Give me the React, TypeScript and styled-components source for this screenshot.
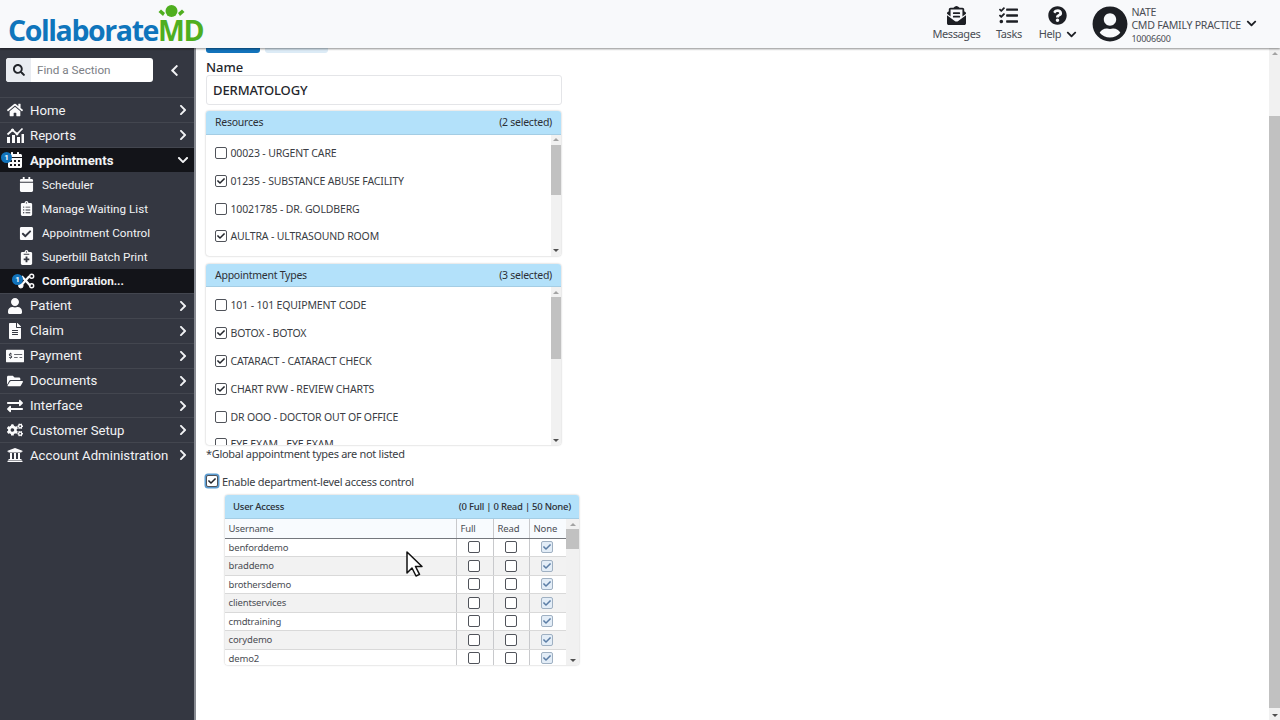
import * as React from 'react'
import styled, { createGlobalStyle } from 'styled-components'
import {
  FaCalendar, FaCalendarAlt, FaCheck, FaCheckSquare, FaChevronDown, FaChevronLeft, FaChevronRight,
  FaClipboardList, FaCogs, FaEnvelopeOpenText, FaExchangeAlt, FaFileAlt, FaFolderOpen, FaHome,
  FaMoneyCheckAlt, FaNotesMedical, FaQuestionCircle, FaSearch, FaTasks, FaUniversity, FaUser, FaUserCircle,
} from 'react-icons/fa'

const GlobalStyle = createGlobalStyle`
  html, body {
    margin: 0;
    height: 100%;
    overflow: hidden;
    background: #fff;
  }
  * { box-sizing: border-box; }
`

const contentFont = `"Noto Sans", "Open Sans", sans-serif`

const Page = styled.div`
  width: 1280px;
  height: 720px;
  position: relative;
  display: flex;
  flex-direction: column;
  overflow: hidden;
  font-family: ${contentFont};
  color: #33363d;
`

const Header = styled.header`
  height: 48px;
  flex: none;
  display: flex;
  align-items: center;
  justify-content: space-between;
  background: #f8f9fb;
  box-shadow: 0 1px 2px rgba(0, 0, 0, 0.45);
  position: relative;
  z-index: 3;
  padding: 0 23px 0 8px;
`

const Logo = styled.div`
  position: relative;
  display: flex;
  align-items: baseline;
  font-family: "Open Sans", sans-serif;
  font-weight: 700;
  font-size: 28.5px;
  line-height: 48px;
  letter-spacing: -1.4px;
  padding-top: 12px;
  color: #0f75bc;
  svg {
    position: absolute;
    left: 149px;
    top: 9px;
  }
`

const LogoMark = styled.span`
  color: #4fae1f;
  letter-spacing: -1.5px;
`

const HeaderRight = styled.div`
  display: flex;
  align-items: center;
`

const HeaderAction = styled.div<{ $width: number }>`
  width: ${p => p.$width}px;
  display: flex;
  flex-direction: column;
  align-items: center;
  color: #1d1f24;
  font-size: 11px;
  letter-spacing: -0.4px;
  svg { font-size: 19px; }
`

const ActionLabel = styled.span`
  color: #4a4d54;
  line-height: 16px;
  margin-top: 1px;
  display: flex;
  align-items: center;
  gap: 5px;
  svg { font-size: 11px; color: #1d1f24; }
`

const Account = styled.div`
  display: flex;
  align-items: center;
  margin-left: 10px;
  color: #1d1f24;
`

const AccountText = styled.div`
  margin-left: 3.5px;
  padding-top: 2px;
  font-size: 10.6px;
  line-height: 13px;
  letter-spacing: -0.25px;
  color: #4a4d54;
`

const AccountId = styled.div`
  font-size: 9px;
`

const AccountRow = styled.div`
  display: flex;
  align-items: center;
  gap: 5px;
  svg { font-size: 11px; color: #1d1f24; margin-top: -4px; }
`

const Body = styled.div`
  flex: 1;
  display: flex;
  min-height: 0;
`

const Sidebar = styled.nav`
  width: 196px;
  flex: none;
  background: #343741;
  border-right: 2px solid #888b92;
  font-family: Roboto, sans-serif;
  color: #f2f3f5;
`

const SearchRow = styled.div`
  height: 49.4px;
  padding: 10px 0 0 6px;
  display: flex;
  align-items: flex-start;
`

const SearchBox = styled.div`
  width: 147px;
  height: 24px;
  display: flex;
  border-radius: 3px;
  overflow: hidden;
  background: #fff;
`

const SearchIcon = styled.div`
  width: 25px;
  display: flex;
  align-items: center;
  justify-content: center;
  background: #e9ecf1;
  color: #22252b;
  font-size: 12px;
`

const SearchText = styled.div`
  padding-left: 6px;
  color: #7b7e84;
  font-size: 11.7px;
  line-height: 24px;
`

const Collapse = styled.div`
  margin-left: 15px;
  height: 24px;
  display: flex;
  align-items: center;
  font-size: 13px;
`

const NavRow = styled.div<{ $active?: boolean; $sub?: boolean }>`
  height: ${p => (p.$sub ? 24.2 : 24.9)}px;
  display: flex;
  align-items: center;
  position: relative;
  padding-left: ${p => (p.$sub ? 42 : 30)}px;
  padding-right: 5px;
  font-size: ${p => (p.$sub ? 11.7 : 13.2)}px;
  font-weight: ${p => (p.$active ? 700 : 400)};
  white-space: nowrap;
  background: ${p => (p.$active ? '#131419' : 'transparent')};
  border-top: 1px solid ${p => (p.$sub ? 'transparent' : '#43464f')};
`

const NavLabel = styled.span`
  flex: 1;
`

const NavIcon = styled.span<{ $sub?: boolean }>`
  position: absolute;
  left: ${p => (p.$sub ? 18 : 5)}px;
  width: ${p => (p.$sub ? 17 : 19)}px;
  display: flex;
  justify-content: center;
  font-size: ${p => (p.$sub ? 15 : 16)}px;
  color: #fbfbfc;
`

const Badge = styled.span<{ $left: number }>`
  position: absolute;
  left: ${p => p.$left}px;
  top: 4px;
  width: 11px;
  height: 11px;
  border-radius: 50%;
  background: #1273bb;
  color: #fff;
  font-size: 8px;
  line-height: 11px;
  font-weight: 700;
  text-align: center;
  z-index: 1;
`

const NavArrow = styled.span`
  width: 13px;
  font-size: 12px;
  display: flex;
  justify-content: center;
`

const Main = styled.main`
  flex: 1;
  min-width: 0;
  padding: 0 0 0 10px;
  overflow: hidden;
`

const Form = styled.div`
  width: 373px;
  display: flex;
  flex-direction: column;
`

const Tabs = styled.div`
  height: 5px;
  display: flex;
  gap: 5px;
`

const Tab = styled.div<{ $active?: boolean; $width: number }>`
  width: ${p => p.$width}px;
  border-radius: 0 0 3px 3px;
  background: ${p => (p.$active ? '#1273bb' : '#dcebf6')};
`

const FieldLabel = styled.div`
  margin-top: 6px;
  font-size: 13px;
  line-height: 16px;
  font-weight: 500;
  color: #24262c;
`

const TextField = styled.div`
  width: 356px;
  height: 30px;
  border: 1px solid #e4e5e8;
  border-radius: 3px;
  padding-left: 6px;
  font-size: 13px;
  line-height: 28px;
  font-weight: 500;
  letter-spacing: -0.1px;
  color: #24262c;
  margin-bottom: 6px;
`

const Panel = styled.section<{ $width?: number; $height: number; $gap?: number }>`
  width: ${p => p.$width ?? 355}px;
  height: ${p => p.$height}px;
  margin-top: ${p => p.$gap ?? 0}px;
  flex: none;
  display: flex;
  flex-direction: column;
  border-radius: 3px;
  background: #fff;
  box-shadow: 0 0 2px rgba(0, 0, 0, 0.3);
  overflow: hidden;
`

const PanelHeader = styled.div`
  height: 23.5px;
  flex: none;
  display: flex;
  justify-content: space-between;
  align-items: center;
  padding: 0 9px;
  background: #b3e1fa;
  border-bottom: 1px solid #a4cde4;
  font-size: 10.5px;
  letter-spacing: -0.25px;
  color: #2d3036;
`

const PanelBody = styled.div`
  flex: 1;
  min-height: 0;
  display: flex;
`

const CheckList = styled.div`
  flex: 1;
  overflow: hidden;
  padding: 4.6px 0 0 9px;
`

const CheckRow = styled.div`
  height: 27.8px;
  display: flex;
  align-items: center;
  gap: 3.5px;
  font-size: 10.5px;
  letter-spacing: -0.15px;
  color: #3a3d44;
`

const Box = styled.span<{ $muted?: boolean; $focus?: boolean }>`
  width: 12px;
  height: 12px;
  flex: none;
  display: inline-flex;
  align-items: center;
  justify-content: center;
  border: 1px solid ${p => (p.$muted ? '#9fb0c2' : '#50535a')};
  border-radius: 2px;
  background: ${p => (p.$muted ? '#e3edf7' : '#fff')};
  color: ${p => (p.$muted ? '#5c7ea6' : '#23262c')};
  font-size: 8px;
  box-shadow: ${p => (p.$focus ? '0 0 0 1.5px #5b9bd0' : 'none')};
`

const Scrollbar = styled.div<{ $width: number }>`
  width: ${p => p.$width}px;
  flex: none;
  display: flex;
  flex-direction: column;
  background: #f1f1f1;
`

const ScrollArrow = styled.div<{ $down?: boolean }>`
  height: 10px;
  flex: none;
  display: flex;
  align-items: center;
  justify-content: center;
  &::before {
    content: '';
    border-left: 3px solid transparent;
    border-right: 3px solid transparent;
    ${p => (p.$down ? 'border-top: 3px solid #505050;' : 'border-bottom: 3px solid #a3a3a3;')}
  }
`

const ScrollTrack = styled.div`
  flex: 1;
`

const ScrollThumb = styled.div<{ $height: number; $top?: number }>`
  height: ${p => p.$height}px;
  margin-top: ${p => p.$top ?? 0}px;
  background: #c1c1c1;
`

const Note = styled.div`
  margin-top: 1px;
  font-size: 11px;
  line-height: 16px;
  letter-spacing: -0.3px;
  color: #3a3d44;
`

const EnableRow = styled.div`
  margin-top: 11px;
  height: 16px;
  display: flex;
  align-items: center;
  gap: 4px;
  font-size: 11px;
  letter-spacing: -0.27px;
  color: #3a3d44;
`

const AccessWrap = styled.div`
  margin: 6px 0 0 19px;
`

const AccessHead = styled(PanelHeader)`
  height: 24px;
  font-weight: 500;
  padding: 0 8px;
  font-size: 9.5px;
`

const AccessTable = styled.div`
  flex: 1;
  min-width: 0;
  overflow: hidden;
`

const AccessRow = styled.div<{ $head?: boolean; $odd?: boolean }>`
  height: ${p => (p.$head ? 19.5 : 18.5)}px;
  display: grid;
  grid-template-columns: 231px 37px 36px 37px;
  background: ${p => (p.$head ? '#f8fbfe' : p.$odd ? '#f2f2f2' : '#fff')};
  border-bottom: 1px solid ${p => (p.$head ? '#74777d' : '#d9d9d9')};
  font-size: 9.5px;
  letter-spacing: -0.15px;
  color: #4a4d54;
`

const AccessCell = styled.div<{ $center?: boolean }>`
  display: flex;
  align-items: center;
  padding-left: ${p => (p.$center ? 0 : 3.5)}px;
  padding-right: ${p => (p.$center ? 1.5 : 0)}px;
  justify-content: ${p => (p.$center ? 'center' : 'flex-start')};
  & + & { border-left: 1px solid #c8c9cc; }
`

const PageScrollbar = styled(Scrollbar)`
  background: #f1f1f1;
`

const Pointer = styled.svg`
  position: absolute;
  left: 406px;
  top: 551px;
  z-index: 2;
`

const ReportsIcon = () => (
  <svg width="18" height="16" viewBox="0 0 18 16" fill="currentColor">
    <path d="M1 10h3v6H1zM6 8h3v8H6zM11 10h3v6h-3zM15.5 7h2.5v9h-2.5z" />
    <path d="M1.5 7.5 6.5 3l4.5 4 5.5-5.5" fill="none" stroke="currentColor" strokeWidth="1.7" />
    <circle cx="6.5" cy="3" r="1.6" />
    <circle cx="11" cy="7" r="1.4" />
  </svg>
)

const ConfigIcon = () => (
  <svg width="18" height="16" viewBox="0 0 18 16" fill="none" stroke="currentColor">
    <path d="M3 13 12 3M4 3l9 10" strokeWidth="2.4" />
    <circle cx="14.5" cy="3" r="2.1" strokeWidth="1.5" />
    <circle cx="14.5" cy="13" r="2.1" strokeWidth="1.5" />
    <circle cx="3" cy="13" r="2.4" fill="currentColor" />
  </svg>
)

const Check: React.FC<{ checked?: boolean; muted?: boolean; focus?: boolean }> = ({ checked, muted, focus }) => (
  <Box $muted={muted} $focus={focus}>{checked && <FaCheck />}</Box>
)

const PanelScroll: React.FC<{ width: number; thumb: number }> = ({ width, thumb }) => (
  <Scrollbar $width={width}>
    <ScrollArrow />
    <ScrollTrack>
      <ScrollThumb $height={thumb} />
    </ScrollTrack>
    <ScrollArrow $down />
  </Scrollbar>
)

const topNav = [
  { label: 'Home', icon: <FaHome /> },
  { label: 'Reports', icon: <ReportsIcon /> },
]
const subNav = [
  { label: 'Scheduler', icon: <FaCalendar /> },
  { label: 'Manage Waiting List', icon: <FaClipboardList /> },
  { label: 'Appointment Control', icon: <FaCheckSquare /> },
  { label: 'Superbill Batch Print', icon: <FaNotesMedical /> },
]
const bottomNav = [
  { label: 'Patient', icon: <FaUser /> },
  { label: 'Claim', icon: <FaFileAlt /> },
  { label: 'Payment', icon: <FaMoneyCheckAlt size={18} /> },
  { label: 'Documents', icon: <FaFolderOpen /> },
  { label: 'Interface', icon: <FaExchangeAlt /> },
  { label: 'Customer Setup', icon: <FaCogs /> },
  { label: 'Account Administration', icon: <FaUniversity /> },
]

const resources = [
  { label: '00023 - URGENT CARE', checked: false },
  { label: '01235 - SUBSTANCE ABUSE FACILITY', checked: true },
  { label: '10021785 - DR. GOLDBERG', checked: false },
  { label: 'AULTRA - ULTRASOUND ROOM', checked: true },
]
const appointmentTypes = [
  { label: '101 - 101 EQUIPMENT CODE', checked: false },
  { label: 'BOTOX - BOTOX', checked: true },
  { label: 'CATARACT - CATARACT CHECK', checked: true },
  { label: 'CHART RVW - REVIEW CHARTS', checked: true },
  { label: 'DR OOO - DOCTOR OUT OF OFFICE', checked: false },
  { label: 'EYE EXAM - EYE EXAM', checked: false },
]
const users = ['benforddemo', 'braddemo', 'brothersdemo', 'clientservices', 'cmdtraining', 'corydemo', 'demo2']

const App: React.FC = () => (
  <Page>
    <GlobalStyle />
    <Header>
      <Logo>
        <svg width="30" height="18" viewBox="0 0 30 18" fill="#4fae1f">
          <circle cx="14.5" cy="8" r="6" />
          <path d="M1.5 9 4 6.5 8 10l-2 3zM27.5 9 25 6.5 21 10l2 3z" />
        </svg>
        Collaborate<LogoMark>MD</LogoMark>
      </Logo>
      <HeaderRight>
        <HeaderAction $width={55}>
          <FaEnvelopeOpenText />
          <ActionLabel>Messages</ActionLabel>
        </HeaderAction>
        <HeaderAction $width={50}>
          <FaTasks />
          <ActionLabel>Tasks</ActionLabel>
        </HeaderAction>
        <HeaderAction $width={48}>
          <FaQuestionCircle />
          <ActionLabel>Help <FaChevronDown /></ActionLabel>
        </HeaderAction>
        <Account>
          <FaUserCircle size={36} />
          <AccountText>
            <div>NATE</div>
            <AccountRow>CMD FAMILY PRACTICE <FaChevronDown /></AccountRow>
            <AccountId>10006600</AccountId>
          </AccountText>
        </Account>
      </HeaderRight>
    </Header>
    <Body>
      <Sidebar>
        <SearchRow>
          <SearchBox>
            <SearchIcon><FaSearch /></SearchIcon>
            <SearchText>Find a Section</SearchText>
          </SearchBox>
          <Collapse><FaChevronLeft /></Collapse>
        </SearchRow>
        {topNav.map(item => (
          <NavRow key={item.label}>
            <NavIcon>{item.icon}</NavIcon>
            <NavLabel>{item.label}</NavLabel>
            <NavArrow><FaChevronRight /></NavArrow>
          </NavRow>
        ))}
        <NavRow $active>
          <Badge $left={1}>1</Badge>
          <NavIcon><FaCalendarAlt /></NavIcon>
          <NavLabel>Appointments</NavLabel>
          <NavArrow><FaChevronDown /></NavArrow>
        </NavRow>
        {subNav.map(item => (
          <NavRow $sub key={item.label}>
            <NavIcon $sub>{item.icon}</NavIcon>
            <NavLabel>{item.label}</NavLabel>
          </NavRow>
        ))}
        <NavRow $sub $active>
          <Badge $left={12}>1</Badge>
          <NavIcon $sub><ConfigIcon /></NavIcon>
          <NavLabel>Configuration...</NavLabel>
        </NavRow>
        {bottomNav.map(item => (
          <NavRow key={item.label}>
            <NavIcon>{item.icon}</NavIcon>
            <NavLabel>{item.label}</NavLabel>
            <NavArrow><FaChevronRight /></NavArrow>
          </NavRow>
        ))}
      </Sidebar>
      <Main>
        <Form>
          <Tabs>
            <Tab $active $width={54} />
            <Tab $width={63} />
          </Tabs>
          <FieldLabel>Name</FieldLabel>
          <TextField>DERMATOLOGY</TextField>
          <Panel $height={144.5}>
            <PanelHeader><span>Resources</span><span>(2 selected)</span></PanelHeader>
            <PanelBody>
              <CheckList>
                {resources.map(r => (
                  <CheckRow key={r.label}><Check checked={r.checked} />{r.label}</CheckRow>
                ))}
              </CheckList>
              <PanelScroll width={10} thumb={50} />
            </PanelBody>
          </Panel>
          <Panel $height={181.5} $gap={8}>
            <PanelHeader><span>Appointment Types</span><span>(3 selected)</span></PanelHeader>
            <PanelBody>
              <CheckList>
                {appointmentTypes.map(a => (
                  <CheckRow key={a.label}><Check checked={a.checked} />{a.label}</CheckRow>
                ))}
              </CheckList>
              <PanelScroll width={10} thumb={62} />
            </PanelBody>
          </Panel>
          <Note>*Global appointment types are not listed</Note>
          <EnableRow><Check checked focus />Enable department-level access control</EnableRow>
          <AccessWrap>
            <Panel $width={354} $height={170}>
              <AccessHead><span>User Access</span><span>(0 Full | 0 Read | 50 None)</span></AccessHead>
              <PanelBody>
                <AccessTable>
                  <AccessRow $head>
                    <AccessCell>Username</AccessCell>
                    <AccessCell>Full</AccessCell>
                    <AccessCell>Read</AccessCell>
                    <AccessCell>None</AccessCell>
                  </AccessRow>
                  {users.map((u, i) => (
                    <AccessRow key={u} $odd={i % 2 === 1}>
                      <AccessCell>{u}</AccessCell>
                      <AccessCell $center><Check /></AccessCell>
                      <AccessCell $center><Check /></AccessCell>
                      <AccessCell $center><Check checked muted /></AccessCell>
                    </AccessRow>
                  ))}
                </AccessTable>
                <PanelScroll width={13} thumb={20} />
              </PanelBody>
            </Panel>
          </AccessWrap>
        </Form>
      </Main>
      <PageScrollbar $width={11}>
        <ScrollArrow />
        <ScrollTrack>
          <ScrollThumb $height={592} $top={58} />
        </ScrollTrack>
        <ScrollArrow $down />
      </PageScrollbar>
    </Body>
    <Pointer width="17" height="26" viewBox="0 0 17 26">
      <path d="M1 1v21l5-5 4 8 3.5-1.7-4-7.8H16z" fill="#fff" stroke="#111" strokeWidth="1.5" strokeLinejoin="round" />
    </Pointer>
  </Page>
)

export default App
